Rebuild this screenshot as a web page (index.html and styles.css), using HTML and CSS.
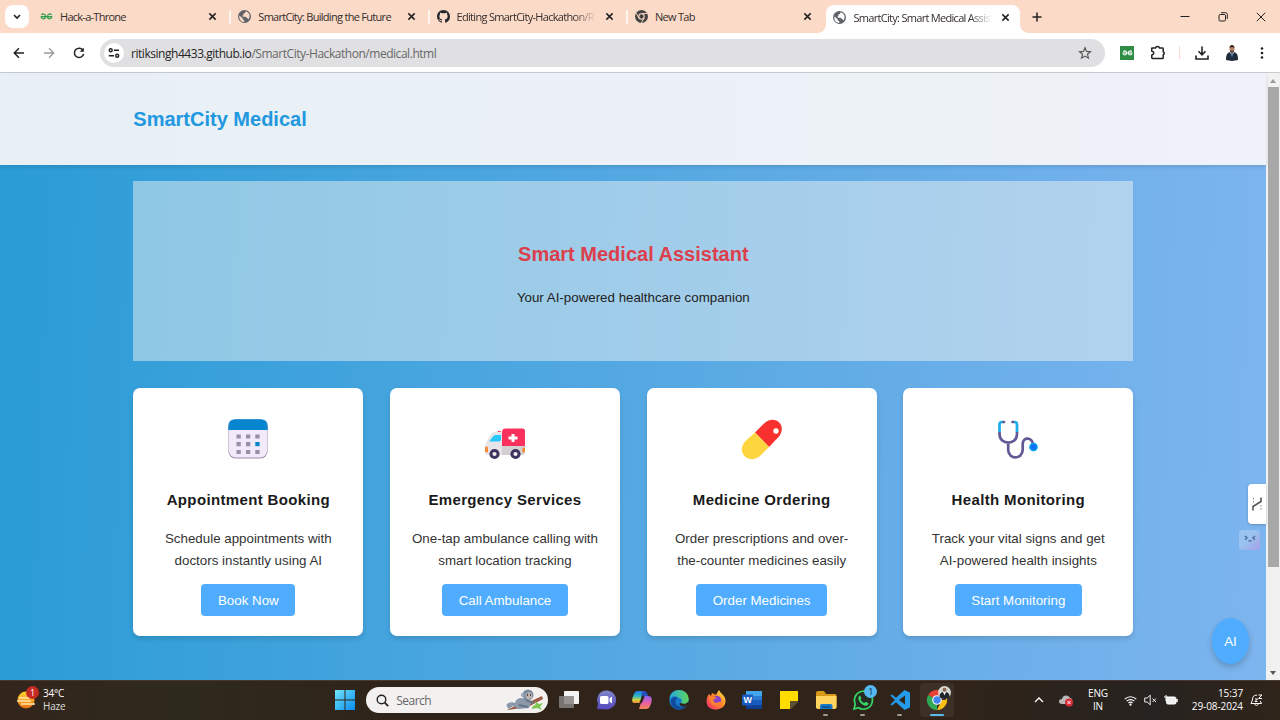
FILE: index.html
```html
<!DOCTYPE html>
<html lang="en">
<head>
<meta charset="utf-8">
<title>SmartCity: Smart Medical Assistant</title>
<link rel="stylesheet" href="styles.css">
</head>
<body>
<svg class="defs" width="0" height="0" aria-hidden="true">
  <defs>
    <symbol id="globe" viewBox="0 0 24 24"><circle cx="12" cy="12" r="12" fill="#5f6368"/><path d="M2.500 10l6 5v2l3 2v3C5 22 1.500 16 2.500 10zM14 2.500l-1 3-3 1v3l-2 1 1 2h5l2 2 2 1 1 2c5-6 2-13-5-15z" fill="currentColor"/></symbol>
    <symbol id="close" viewBox="0 0 10 10"><path d="M1.500 1.500l7 7M8.500 1.500l-7 7" stroke="#222" stroke-width="1.700" fill="none"/></symbol>
    <symbol id="gfg" viewBox="0 0 26 14"><path d="M2 7h22M3 4c2-3 8-3 8 3s-8 6-9 0M23 4c-2-3-8-3-8 3s8 6 9 0" fill="none" stroke="currentColor" stroke-width="2.500"/></symbol>
    <linearGradient id="win" x1="0" y1="0" x2="1" y2="1"><stop offset="0" stop-color="#73e5fa"/><stop offset="1" stop-color="#078bf0"/></linearGradient>
    <linearGradient id="sun" x1="0" y1="0" x2="0" y2="1"><stop offset="0" stop-color="#ffd52e"/><stop offset="1" stop-color="#ee7014"/></linearGradient>
    <linearGradient id="teams" x1="0" y1="0" x2="0" y2="1"><stop offset="0" stop-color="#7f86c9"/><stop offset="1" stop-color="#5546bb"/></linearGradient>
    <linearGradient id="copA" x1="0" y1="0" x2="0" y2="1"><stop offset="0" stop-color="#1d79ec"/><stop offset=".45" stop-color="#32b9bd"/><stop offset=".75" stop-color="#d8d33c"/><stop offset="1" stop-color="#f28435"/></linearGradient>
    <linearGradient id="copB" x1="0" y1="0" x2="0" y2="1"><stop offset="0" stop-color="#8d62f0"/><stop offset=".5" stop-color="#e55fa9"/><stop offset="1" stop-color="#f48551"/></linearGradient>
    <linearGradient id="edgeA" x1="0" y1="0" x2="1" y2="0"><stop offset="0" stop-color="#26a9e2"/><stop offset="1" stop-color="#5cd65a"/></linearGradient>
    <linearGradient id="fox" x1="1" y1="0" x2="0" y2="1"><stop offset="0" stop-color="#fff044"/><stop offset=".45" stop-color="#ff8b26"/><stop offset="1" stop-color="#f52478"/></linearGradient>
  </defs>
</svg>

<header class="tabstrip">
  <span class="tabsearch"><svg width="8" height="6" viewBox="0 0 8 6"><path d="M1 1l3 3 3-3" fill="none" stroke="#222" stroke-width="1.600"/></svg></span>
  <nav class="tabs">
    <div class="tab"><svg class="fav green" width="13" height="7"><use href="#gfg"/></svg><span class="tabtitle">Hack-a-Throne</span><svg class="x"><use href="#close"/></svg></div>
    <div class="tab divided"><svg class="fav" width="13" height="13"><use href="#globe"/></svg><span class="tabtitle">SmartCity: Building the Future</span><svg class="x"><use href="#close"/></svg></div>
    <div class="tab divided"><svg class="fav" width="13" height="13" viewBox="0 0 16 16"><path fill="#24292f" d="M8 0C3.580 0 0 3.580 0 8c0 3.540 2.290 6.530 5.470 7.590.4.070.55-.17.55-.38v-1.490c-2.010.37-2.530-.49-2.690-.94-.09-.23-.48-.94-.82-1.130-.28-.15-.68-.52-.01-.53.63-.01 1.080.58 1.230.82.72 1.210 1.870.87 2.330.66.07-.52.28-.87.51-1.070-1.780-.2-3.640-.89-3.640-3.950 0-.87.31-1.590.82-2.150-.08-.2-.36-1.020.08-2.120 0 0 .67-.21 2.200.82a7.500 7.500 0 014 0c1.530-1.040 2.200-.82 2.200-.82.44 1.100.16 1.920.08 2.120.51.56.82 1.270.82 2.150 0 3.070-1.870 3.750-3.650 3.950.29.25.54.73.54 1.480v2.200c0 .21.15.46.55.38A8 8 0 0016 8c0-4.420-3.580-8-8-8z"/></svg><span class="tabtitle fade">Editing SmartCity-Hackathon/R</span><svg class="x"><use href="#close"/></svg></div>
    <div class="tab divided"><svg class="fav" width="13" height="13" viewBox="0 0 24 24"><circle cx="12" cy="12" r="12" fill="#444"/><circle cx="12" cy="12" r="5" fill="#444" stroke="#fcdac8" stroke-width="2"/><path d="M12 6.500h11M7.200 15L2 5.500M16.800 15L11.500 24" stroke="#fcdac8" stroke-width="1.700"/></svg><span class="tabtitle">New Tab</span><svg class="x"><use href="#close"/></svg></div>
    <div class="tab active"><svg class="fav" width="13" height="13"><use href="#globe"/></svg><span class="tabtitle fade">SmartCity: Smart Medical Assist</span><svg class="x"><use href="#close"/></svg></div>
  </nav>
  <svg class="newtab" width="10" height="10" viewBox="0 0 10 10"><path d="M5 .5v9M.5 5h9" stroke="#222" stroke-width="1.500"/></svg>
  <div class="wincontrols">
    <svg width="10" height="10" viewBox="0 0 10 10"><path d="M.5 4.500h9" stroke="#222"/></svg>
    <svg width="10" height="10" viewBox="0 0 10 10"><rect x="1" y="2.500" width="6.500" height="6.500" rx="1.200" fill="none" stroke="#222"/><path d="M3 .7h4.500q1.800 0 1.800 1.800V7" fill="none" stroke="#222"/></svg>
    <svg width="10" height="10" viewBox="0 0 10 10"><path d="M.8.800l8.400 8.400M9.200.800L.8 9.200" stroke="#222"/></svg>
  </div>
</header>

<div class="toolbar">
  <div class="navbuttons">
    <svg width="12" height="12" viewBox="0 0 12 12"><path d="M11 6H1.500M6 1.300L1.300 6 6 10.700" fill="none" stroke="#222" stroke-width="1.500"/></svg>
    <svg width="12" height="12" viewBox="0 0 12 12"><path d="M1 6h9.500M6 1.300L10.700 6 6 10.700" fill="none" stroke="#999" stroke-width="1.300"/></svg>
    <svg width="12" height="12" viewBox="0 0 12 12"><path d="M10.200 3.500A4.700 4.700 0 1010.700 7" fill="none" stroke="#222" stroke-width="1.500"/><path d="M10.800.700v4.100H6.700z" fill="#222"/></svg>
  </div>
  <div class="omnibox">
    <span class="siteinfo"><svg width="12" height="12" viewBox="0 0 12 12" fill="none" stroke="#222" stroke-width="1.400"><circle cx="2.700" cy="3.200" r="1.500"/><path d="M5.800 3.200H11M.8 8.800H6"/><circle cx="9.200" cy="8.800" r="1.500"/></svg></span>
    <span class="url">ritiksingh4433.github.io<span class="path">/SmartCity-Hackathon/medical.html</span></span>
    <svg class="star" width="14" height="14" viewBox="0 0 24 24"><path d="M12 3l2.700 6.200 6.700.6-5.100 4.400 1.600 6.600L12 17.300l-5.900 3.500 1.600-6.600-5.100-4.400 6.700-.6z" fill="none" stroke="#555" stroke-width="2"/></svg>
  </div>
  <div class="actions">
    <span class="ext"><svg width="11" height="6"><use href="#gfg"/></svg></span>
    <svg width="15" height="15" viewBox="0 0 15 15"><path d="M2 3h3.500q.3-1.500 2-1.500T9.500 3h3q.7 0 .7.700v3q1 .3 1 1.500t-1 1.500v3q0 .8-.8.800H2.500q-.7 0-.7-.7V9.900q2-.3 2-1.900T1.800 6.200V3.700Q1.500 3 2 3z" fill="none" stroke="#222" stroke-width="1.500" stroke-linejoin="round"/></svg>
    <i class="sep"></i>
    <svg width="14" height="14" viewBox="0 0 14 14"><path d="M7 .5v8M3.500 5.300L7 8.800l3.500-3.500M1 9.500v3.500h12V9.500" fill="none" stroke="#222" stroke-width="1.600"/></svg>
    <svg width="16" height="16" viewBox="0 0 16 16"><path d="M2 15c0-7 2-8 6-8s6 1 6 8l-6 1z" fill="#202b3b"/><path d="M6 7h4l-2 5z" fill="#dbe4ef"/><path d="M8 8v5" stroke="#194678" stroke-width="1.200"/><ellipse cx="8" cy="4" rx="2.500" ry="3.500" fill="#b17d67"/><path d="M5.500 3C5.500-1 10.500-1 10.500 3 9 1.500 7 1.500 5.500 3zM6 5.500c1 1 3 1 4 0-.5 3-3.500 3-4 0z" fill="#2b211f"/></svg>
    <svg width="4" height="12" viewBox="0 0 4 12" fill="#222"><circle cx="2" cy="1.500" r="1.300"/><circle cx="2" cy="6" r="1.300"/><circle cx="2" cy="10.500" r="1.300"/></svg>
  </div>
</div>

<div class="viewport">
  <div class="page">
    <div class="siteheader"><div class="wrap"><h1>SmartCity Medical</h1></div></div>
    <main class="wrap">
      <section class="hero"><h2>Smart Medical Assistant</h2><p>Your AI-powered healthcare companion</p></section>
      <section class="cards">
        <article class="card">
          <svg class="art" viewBox="0 0 40 40"><rect x=".5" y=".5" width="39" height="39" rx="7" fill="#9b8caa"/><rect x="1" y="1" width="38" height="37.500" rx="6.500" fill="#f1eaf8"/><path d="M.3 11V7.500Q.3.300 7.500.300h25q7.200 0 7.200 7.200V11z" fill="#0785d0"/><path d="M8.500 15.500h4.300v4h-4.300zm9.500 0h4.300v4H18zm9.300 0h4.300v4h-4.300zM8.500 23h4.300v4.200h-4.300zm9.500 0h4.300v4.200H18zM8.500 31h4.300v4h-4.300zm9.500 0h4.300v4H18zm9.300 0h4.300v4h-4.300z" fill="#9b8ea9"/><path d="M27.300 23h4.300v4.200h-4.300z" fill="#0785c7"/></svg>
          <h3>Appointment Booking</h3><p>Schedule appointments with doctors instantly using AI</p><button>Book Now</button>
        </article>
        <article class="card">
          <svg class="art" viewBox="0 0 40 40"><path d="M12.700 12h3v2h-3z" fill="#f2395b"/><path d="M0 29c0-4 3-9 5-12 1.200-2.500 3-4 6-4h6v23H3q-3 0-3-3z" fill="#e7e5e8"/><path d="M17 27h23v6q0 3-3 3H17z" fill="#d2d0d3"/><path d="M17 27V13q0-3.500 3.500-3.500h17q2.500 0 2.500 2.500v15z" fill="#fa315c"/><path d="M4 22.500l4-5q1-1.500 3-1.500h5v4.500q0 2-2 2z" fill="#27c8fc"/><path d="M26.500 15h3v2.500h3v3h-3V23h-3v-2.500h-3v-3h3z" fill="#fff"/><rect x="0" y="27.500" width="3" height="6" rx="1.300" fill="#f68a36"/><rect x="37.300" y="28.500" width="2.700" height="5" rx="1.200" fill="#f68a36"/><g fill="#eee" stroke="#3e355f" stroke-width="3"><circle cx="9.500" cy="35" r="3.600"/><circle cx="30.500" cy="35" r="3.600"/></g></svg>
          <h3>Emergency Services</h3><p>One-tap ambulance calling with smart location tracking</p><button>Call Ambulance</button>
        </article>
        <article class="card">
          <svg class="art" viewBox="0 0 40 40"><path d="M13 13.500L21.500 5C33-6 46 7 36.500 18L27 28z" fill="#f8312f"/><path d="M13 13.500L3.500 22C-7 33 7 47 18.500 36.500L27 28z" fill="#fcd53f"/><circle cx="34" cy="12" r="2.700" fill="#fff"/></svg>
          <h3>Medicine Ordering</h3><p>Order prescriptions and over-the-counter medicines easily</p><button>Order Medicines</button>
        </article>
        <article class="card">
          <svg class="art" viewBox="0 0 40 40" fill="none" stroke-width="2.700" stroke-linecap="round"><path d="M1.500 13v2c0 11.500 17.500 11.500 17.500 0v-2M10.200 23.500v7.300c0 10 14.500 10 14.500 0v-6c0-7.500 10.500-7 10.500 2" stroke="#635994"/><path d="M5.500 3H4Q1.500 3 1.500 5.500V13M15 3h1.500Q19 3 19 5.500V13" stroke="#1dadea" stroke-linecap="butt"/><path d="M5.500 3H6M15 3h-.5" stroke="#635994"/><circle cx="35.500" cy="28" r="4.300" fill="#00a6ed"/><circle cx="35.500" cy="28" r="3" fill="#0b74f5"/></svg>
          <h3>Health Monitoring</h3><p>Track your vital signs and get AI-powered health insights</p><button>Start Monitoring</button>
        </article>
      </section>
    </main>
    <aside class="sidetab"><svg width="10" height="14" viewBox="0 0 10 14"><path d="M1 13.500V9.500l8-5V.500" fill="none" stroke="#555" stroke-width="1.600"/><path d="M1.500 1v5M9 8v5" stroke="#888" stroke-dasharray="1.500 1.500"/></svg></aside>
    <aside class="bot"><svg width="12" height="7" viewBox="0 0 12 7"><path d="M.8 1l2.400 1.800L1 4.800M11.200 1L8.800 2.800 11 4.800M4.500 5.500q1.500 1.200 3 0" fill="none" stroke="#44699b" stroke-width="1.200"/></svg></aside>
    <button class="ai">AI</button>
  </div>
  <div class="scrollbar"><i class="up"></i><div class="thumb"></div><i class="down"></i></div>
</div>

<footer class="taskbar">
  <div class="weather">
    <span class="sunbox"><svg width="18" height="18" viewBox="0 0 18 18"><circle cx="9" cy="9" r="8.500" fill="url(#sun)"/><path d="M2 7h11M0 10h14M4 13h14" stroke="#ffe5ac" stroke-width="1.300"/></svg><b class="badge red">1</b></span>
    <div><div class="temp">34°C</div><div class="haze">Haze</div></div>
  </div>
  <div class="apps">
    <svg width="20" height="20" viewBox="0 0 20 20" fill="url(#win)"><path d="M0 0h9.500v9.500H0zM10.500 0H20v9.500h-9.500zM0 10.500h9.500V20H0zM10.500 10.500H20V20h-9.500z"/></svg>
    <div class="search">
      <svg width="13" height="13" viewBox="0 0 13 13"><circle cx="5.500" cy="5.500" r="4.300" fill="none" stroke="#222" stroke-width="1.400"/><path d="M8.700 8.700l3.500 3.500" stroke="#222" stroke-width="1.800"/></svg>
      <span>Search</span>
      <svg class="monkey" width="39" height="22" viewBox="0 0 39 22"><path d="M2 21l10-5 10-2L37 7l1 3-15 8-20 3z" fill="#9c5943"/><path d="M27 18l4-3-1-3 4 3 4-1-3 4 2 3-5-2-5 1z" fill="#7fc653"/><path d="M3 19c-5-5 4-7 7-5 1-5 6-6 10-4l6 4-2 5-10 1-6-3-4 3z" fill="#8c99ab"/><circle cx="23" cy="6" r="5.500" fill="#7c8a9f"/><circle cx="17.800" cy="6" r="2" fill="#9aa8b9"/><ellipse cx="24" cy="7" rx="3.300" ry="3.700" fill="#b9b0af"/><path d="M22 6h1m2 0h1" stroke="#222" stroke-width="1.300"/><path d="M21 11l8 3M14 16l9 2" stroke="#65758b" stroke-width="2"/></svg>
    </div>
    <svg width="20" height="20" viewBox="0 0 20 20"><rect x="5" y="1" width="15" height="13" rx="1" fill="#f5f3f1"/><rect x="0" y="6" width="15" height="12" rx="1" fill="#858381" opacity=".85"/></svg>
    <svg width="20" height="20" viewBox="0 0 20 20"><path d="M1 19l1-5A9.500 9.500 0 1110 19.500z" fill="url(#teams)"/><rect x="4" y="6" width="8.500" height="8" rx="1.500" fill="#fff"/><path d="M13.500 8.500L16 6.500v7l-2.500-2z" fill="#fff"/></svg>
    <svg width="20" height="20" viewBox="0 0 20 20"><path d="M5.500 1H13L9 13H3C0 13-.5 11 .8 7L2 4q1-3 3.500-3z" fill="url(#copA)"/><path d="M16 6c4 0 4.500 3 3.200 7L18 16q-1 3-4 3H7l4-13z" fill="url(#copB)"/><path d="M12 1q3 0 4 5h-4q-2 0-3 3l1-8z" fill="#2851bf"/><path d="M8.500 13L11.500 6" stroke="#30251b" stroke-width="2.500"/></svg>
    <svg width="20" height="20" viewBox="0 0 20 20"><circle cx="10" cy="10" r="9.700" fill="#1678cd"/><path d="M.5 9C1-3 19-3 19.700 9c0 5-5 6-8 4 2-2 1-5-2-5-3-3-7-2-9.200 1z" fill="url(#edgeA)"/><path d="M9 8c-3 0-5 8 4 9 3 0 4-1 5-2-3 7-17 5-16-4 0-3 4-5 7-3z" fill="#114b9b"/><path d="M11.700 13c2.500 1.300 5 1 7-.8l1.300 1-1.500 2.500c-3 2-8 1-8-2z" fill="#30251b"/></svg>
    <svg width="20" height="20" viewBox="0 0 20 20"><path d="M10 19.500C-1 19.500-1 9 3 4l2 2 1-3 4 2c1-2 2-4 3-5 1 3 6 5 6.500 10 .5 6-4 9.500-9.500 9.500z" fill="url(#fox)"/><circle cx="10.500" cy="10.500" r="4.800" fill="#8542cd"/><path d="M3 7c3-1 5-1 8 1-2 0-2 1-4 2 2 5 6 2 9 1-2 7-12 7-13-4z" fill="#ff812e"/></svg>
    <svg width="20" height="20" viewBox="0 0 20 20"><rect x="4" y="1" width="16" height="18" rx="1.500" fill="#2b7cd3"/><path d="M4 1h16v5H4z" fill="#43a7ed"/><path d="M4 10h16v5H4z" fill="#185abd"/><path d="M4 15h16v4H4z" fill="#103f91"/><rect y="4.500" width="11" height="11" rx="1" fill="#185abd"/><text class="wordw" x="1.400" y="13.200">W</text></svg>
    <svg width="20" height="20" viewBox="0 0 20 20"><path d="M1 1h18v10h-8v8H1z" fill="#ffdc00"/><path d="M19 11v1l-7 7h-1v-8z" fill="#5d522f"/></svg>
    <span class="running"><svg width="21" height="20" viewBox="0 0 21 20"><path d="M0 3q0-2 2-2h6l2 3h9q1.500 0 1.500 2v12H0z" fill="#d89918"/><path d="M0 6h20.500v11q0 2-2 2H2q-2 0-2-2z" fill="#ffd45f"/><path d="M4 19v-3q0-2 2-2h8.500q2 0 2 2v3z" fill="#1378c8"/><path d="M6 17h8" stroke="#084d88" stroke-width="1.500"/></svg></span>
    <span class="running"><svg width="20" height="20" viewBox="0 0 20 20"><path d="M1 19l1.300-5A9 9 0 115.500 17.700z" fill="#262b20" stroke="#38d667" stroke-width="1.700"/><path d="M7 5.500l1.500 3-1 1c1 2 2 3 4 3.500l1.200-1.200 2.800 1.400c0 2-2 3-4 2.300-3-1-5-3-6-6-.5-2 .2-3.500 1.500-4z" fill="#38d667"/></svg><b class="badge blue">1</b></span>
    <span class="running"><svg width="20" height="20" viewBox="0 0 20 20"><path d="M14.500 0L20 2.500v15L14.500 20 6 12.300 2 15.500.300 14.500 5 10 .300 5.500 2 4.500l4 3.200zM15 5.500L9 10l6 4.500z" fill="#249be8"/></svg></span>
    <span class="running current"><svg width="20" height="20" viewBox="0 0 20 20"><path d="M10 10L1.300 5A10 10 0 0118.700 5z" fill="#e94235"/><path d="M10 10L1.300 5A10 10 0 0010 20z" fill="#31a854"/><path d="M10 10h8.700V5A10 10 0 0110 20l4-8z" fill="#fbc116"/><circle cx="10" cy="10" r="4.800" fill="#fff"/><circle cx="10" cy="10" r="3.700" fill="#4285f4"/></svg><svg class="profile" width="13" height="13" viewBox="0 0 13 13"><circle cx="6.500" cy="6.500" r="6.500" fill="#d9d7d4"/><path d="M1.500 11c0-4 2-5 5-5s5 1 5 5c-2.500 2.500-7.500 2.500-10 0z" fill="#20242a"/><path d="M5 6h3L6.500 9.500z" fill="#fff"/><circle cx="6.500" cy="3.800" r="2" fill="#8b6652"/></svg></span>
  </div>
  <div class="tray">
    <svg class="chev" width="10" height="6" viewBox="0 0 10 6"><path d="M1 5l4-4 4 4" fill="none" stroke="#fff" stroke-width="1.300"/></svg>
    <svg class="cloud" width="15" height="12" viewBox="0 0 15 12"><path d="M3 9C-1 9-1 4 3 4c1-5 7-4 8-1 3 0 3 5 1 6z" fill="#b9b8b7"/><circle cx="10" cy="7.500" r="4" fill="#d92f3a"/><path d="M8.500 6l3 3m0-3l-3 3" stroke="#fff"/></svg>
    <div class="lang">ENG<br>IN</div>
    <svg class="wifi" width="13" height="11" viewBox="0 0 14 12"><path d="M.7 4.500a9 9 0 0112.600 0M2.800 6.700a6 6 0 018.400 0M4.800 8.800a3.300 3.300 0 014.400 0" fill="none" stroke="#fff" stroke-width="1.300"/><circle cx="7" cy="10.500" r="1.200" fill="#fff"/></svg>
    <svg class="sound" width="13" height="12" viewBox="0 0 13 12"><path d="M.7 4h2.500l3-2.800v9.600l-3-2.800H.700zM8.500 4.500l3.500 3.500m0-3.500L8.500 8" fill="none" stroke="#eee"/></svg>
    <svg class="battery" width="14" height="12" viewBox="0 0 14 12"><rect x="2.500" y="3" width="9.500" height="7" rx="1.500" fill="#eee" stroke="#fff"/><path d="M13 5v3" stroke="#fff" stroke-width="1.500"/><path d="M2 1v6M0 3h4" stroke="#fff"/></svg>
    <div class="clock">15:37<br>29-08-2024</div>
    <svg class="bell" width="13" height="13" viewBox="0 0 13 13"><path d="M7 1.200C3.500 1 2.500 3 2.500 6L1 9.500h10.500L10.300 7M5 10c0 2 3 2 3 0M5 5h2.500L5 7.500h2.500M8.500 1H12L8.500 4.500H12" fill="none" stroke="#fff"/></svg>
  </div>
</footer>
</body>
</html>
```
FILE: styles.css
```css
* { box-sizing: border-box; }
body { margin: 0; width: 1280px; height: 720px; overflow: hidden; display: flex; flex-direction: column; font-family: "Liberation Sans", Arial, sans-serif; background: #fff; }
svg { display: block; flex: none; overflow: visible; }
.defs { position: absolute; }

.tabstrip { height: 33px; display: flex; background: #fcdac8; color: #332e2c; }
.tabsearch { width: 24px; height: 23px; margin: 5px 2px 0 5px; display: grid; place-items: center; background: #fff; border-radius: 8px; flex: none; }
.tabs { display: flex; width: 990px; flex: none; }
.tab { width: 198.300px; flex: none; height: 33px; display: flex; align-items: center; padding: 0 12px 0 9px; position: relative; }
.tab .fav { width: 13px; margin-right: 7px; color: #fcdac8; }
.tab .green { color: #2f9e4d; }
.tabtitle { flex: 1; min-width: 0; white-space: nowrap; font: 11px "Open Sans", "Noto Sans", sans-serif; letter-spacing: -.7px; }
.tab:first-child .tabtitle { letter-spacing: -.730px; }
.fade { -webkit-mask-image: linear-gradient(to right, #000 84%, transparent); mask-image: linear-gradient(to right, #000 84%, transparent); }
.x { width: 9px; height: 9px; margin-left: 9px; }
.divided::before { content: ""; position: absolute; left: 0; top: 10px; width: 2px; height: 14px; background: #fff5ef; }
.active { width: 194px; height: 28px; margin: 5px 0 0 2.300px; padding: 0 10px 4px 7px; background: #fff; border-radius: 8px 8px 0 0; }
.active .fav { color: #fff; }
.active::before, .active::after { content: ""; position: absolute; bottom: 0; width: 8px; height: 8px; }
.active::before { left: -8px; background: radial-gradient(circle at 0 0, transparent 7.500px, #fff 8px); }
.active::after { right: -8px; background: radial-gradient(circle at 100% 0, transparent 7.500px, #fff 8px); }
.newtab { margin: 12px 0 0 11px; }
.wincontrols { display: flex; gap: 28px; margin: 12px 0 0 auto; padding-right: 14px; }

.toolbar { height: 40px; flex: none; display: flex; align-items: center; background: #fff; border-bottom: 1px solid #c9cbd0; padding-left: 13px; }
.navbuttons { display: flex; gap: 18px; width: 87px; }
.omnibox { width: 1005px; height: 28px; background: #e0e0e2; border-radius: 14px; display: flex; align-items: center; padding: 0 13px 0 4px; }
.siteinfo { width: 20px; height: 20px; border-radius: 50%; background: #fff; display: grid; place-items: center; }
.url { flex: 1; margin-left: 7px; font: 12px "Open Sans", sans-serif; color: #252525; letter-spacing: -.460px; white-space: nowrap; padding-top: 1px; }
.path { color: #686868; }
.actions { display: flex; align-items: center; margin-left: 15px; }
.ext { width: 14px; height: 14px; background: #2f8d46; color: #fff; display: grid; place-items: center; margin-right: 16px; }
.sep { width: 1px; height: 13px; background: #fcdac8; margin: 0 15px 0 14px; }
.actions svg:nth-of-type(2) { margin-right: 15px; }
.actions svg:nth-of-type(3) { margin-right: 20px; }

.viewport { height: 607px; flex: none; display: flex; }
.page { width: 1266px; position: relative; background: linear-gradient(92deg, #2a9cd6 0%, #48a5df 35%, #65ade7 70%, #7db5ef 100%); }
.siteheader { height: 92px; background: rgba(251, 248, 248, .91); box-shadow: 0 2px 4px rgba(0,0,0,.12); display: flex; align-items: center; }
.wrap { width: 1000px; margin: 0 0 0 133.330px; }
h1 { margin: 0; font-size: 20px; line-height: 26px; color: #2198e0; }
.hero { margin-top: 16.400px; height: 180px; background: rgba(250,248,242,.46); text-align: center; padding-top: 57.600px; }
h2 { margin: 0; font-size: 20px; line-height: 30px; color: #dc3f4c; }
.hero p { margin: 18px 0 0; font-size: 13.330px; line-height: 22px; color: #222; }
.cards { margin-top: 26.600px; display: grid; grid-template-columns: repeat(4, 230px); justify-content: space-between; }
.card { height: 248px; background: #fff; border-radius: 7px; box-shadow: 0 3px 5px rgba(0,0,0,.12); padding: 31.500px 20px 19px; display: flex; flex-direction: column; align-items: center; text-align: center; }
.art { width: 40px; height: 40px; }
h3 { margin: 27.500px 0 0; font-size: 15px; letter-spacing: .35px; line-height: 26px; color: #1a1a1a; white-space: nowrap; }
.card p { margin: 15px -6px 0; font-size: 13.330px; line-height: 21.800px; color: #333; width: 190px; }
.card button { margin-top: 12.400px; height: 32px; border: 0; border-radius: 4px; padding: 1px 16.700px 0; background: #4facfe; color: #fff; font: 13.330px "Liberation Sans", Arial, sans-serif; white-space: nowrap; }
.sidetab { position: absolute; right: 0; top: 411px; width: 18px; height: 40px; background: #fff; border-radius: 4px 0 0 4px; box-shadow: 0 1px 3px #0003; display: grid; place-items: center; }
.bot { position: absolute; right: 6px; top: 457px; width: 21px; height: 20px; border-radius: 4px; background: linear-gradient(135deg, #9ac3f0 45%, #a69de6); display: flex; justify-content: center; padding-top: 5px; }
.ai { position: absolute; right: 17px; top: 545px; width: 37px; height: 46px; padding: 0; border: 0; border-radius: 50%; background: #4facfe; color: #fff; font: 13.330px "Liberation Sans", Arial, sans-serif; box-shadow: 0 3px 6px #0003; }
.scrollbar { width: 14px; background: #f1f1f1; display: flex; flex-direction: column; align-items: center; padding: 6px 0 5px; }
.scrollbar i { border: 3px solid transparent; }
.up { border-top: 0 !important; border-bottom: 4px solid #999 !important; }
.down { border-bottom: 0 !important; border-top: 4px solid #555 !important; margin-top: auto; }
.thumb { width: 11px; height: 480px; background: #a8a8a8; margin-top: 4px; }

.taskbar { height: 40px; flex: none; background: linear-gradient(to right, #33251c, #2e2a1b 14%, #30241a 30%, #30241a 75%, #272320 90%, #30241a); border-top: 1px solid #49382f; display: flex; color: #fff; font: 10px "Open Sans", sans-serif; }
.weather { display: flex; width: 334.500px; padding: 6px 0 0 17px; line-height: 13px; letter-spacing: -.2px; }
.sunbox { position: relative; width: 26px; padding-top: 4px; }
.haze { color: #ddd; }
.badge { position: absolute; display: grid; place-items: center; width: 13px; height: 13px; border-radius: 50%; font-size: 9px; font-weight: 400; line-height: 13px; }
.red { background: #c52b23; left: 9px; top: -1px; }
.blue { background: #56b8f0; color: #142834; left: 11px; top: -5px; }
.apps { display: flex; align-items: center; gap: 16.700px; height: 38px; }
.search { width: 182px; height: 26px; border-radius: 13px; background: #f2f1f0; margin: 0 -6px 0 -5px; display: flex; align-items: center; padding: 0 4px 0 10px; color: #666; font-size: 12px; letter-spacing: -.5px; }
.search span { margin-left: 7px; flex: 1; }
.running { position: relative; }
.running::after { content: ""; position: absolute; left: 7px; bottom: -6px; width: 5px; height: 2px; border-radius: 1px; background: #a09992; }
.current::before { content: ""; position: absolute; left: -7px; top: -7px; width: 34px; height: 34px; border-radius: 4px; background: #3c3027; }
.current svg { position: relative; }
.current .profile { position: absolute; right: -4px; top: -4px; }
.current::after { left: 3px; width: 14px; background: #5abbe8; }
.wordw { font: bold 9px "Liberation Sans", Arial, sans-serif; fill: #fff; }
.tray { margin-left: auto; display: flex; align-items: center; height: 38px; padding-right: 17px; line-height: 13px; }
.cloud { margin: 2px 0 0 15px; }
.lang { width: 30px; margin: 0 10px 0 9px; text-align: center; letter-spacing: -.2px; }
.wifi { margin-right: 7px; }
.sound { margin-right: 7px; }
.clock { width: 65px; text-align: right; letter-spacing: -.1px; }
.bell { margin-left: 7px; }
.lang + .wifi { margin-left: 1px; }
```
